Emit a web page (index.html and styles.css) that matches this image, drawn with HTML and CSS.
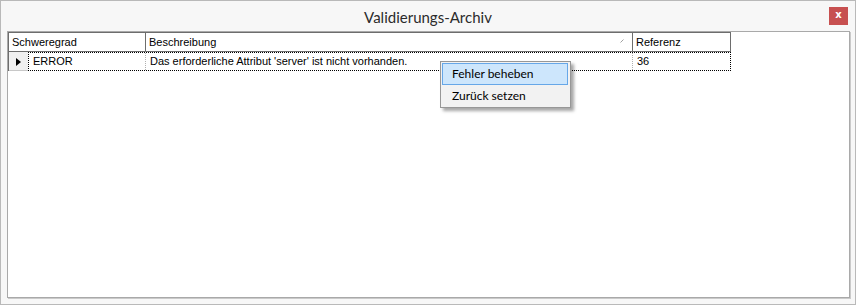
FILE: index.html
```html
<!DOCTYPE html>
<html lang="de">
  <head>
    <meta charset="UTF-8" />
    <meta name="viewport" content="width=device-width, initial-scale=1.0" />
    <title>Validierungs-Archiv</title>
    <link rel="stylesheet" href="styles.css">
  </head>
  <body>
    <div class="window">
      <div class="titlebar">
        <span></span>
        <span class="title">Validierungs-Archiv</span>
        <button class="close" type="button">x</button>
      </div>
      <div class="panel">
        <div class="grid">
          <div class="grid-head">
            <div class="hcell">Schweregrad</div>
            <div class="hcell sorted">
              Beschreibung
              <svg class="sort" width="4" height="4" viewBox="0 0 4 4">
                <line x1="0.5" y1="3.5" x2="3.5" y2="0.5" stroke="#a0a0a0" stroke-width="1" />
              </svg>
            </div>
            <div class="hcell">Referenz</div>
          </div>
          <div class="grid-row">
            <div class="rowhead">
              <svg width="5" height="8" viewBox="0 0 5 8">
                <polygon points="0,0 5,4 0,8" fill="#000" />
              </svg>
            </div>
            <div class="cells">
              <div class="cell">ERROR</div>
              <div class="cell">Das erforderliche Attribut 'server' ist nicht vorhanden.</div>
              <div class="cell">36</div>
            </div>
          </div>
        </div>
      </div>
      <ul class="menu">
        <li class="active">Fehler beheben</li>
        <li>Zurück setzen</li>
      </ul>
    </div>
  </body>
</html>
```

FILE: styles.css
```css
body {
  margin: 0;
  background-color: #ffffff;
}
.window {
  position: relative;
  box-sizing: border-box;
  width: 856px;
  height: 305px;
  border: 1px solid #b9b9b9;
  background-color: #f7f7f7;
}
.titlebar {
  display: grid;
  grid-template-columns: 1fr auto 1fr;
  height: 30px;
}
.title {
  font-family: "Lato", "Noto Sans", sans-serif;
  font-size: 15px;
  color: #2b2b2b;
  padding-top: 7px;
}
.close {
  justify-self: end;
  margin: 6px 7px 0 0;
  width: 19px;
  height: 18px;
  padding: 0 0 2px 0;
  border: none;
  background-color: #c75050;
  color: #ffffff;
  font-family: "DejaVu Sans", sans-serif;
  font-size: 10px;
  font-weight: bold;
  line-height: 14px;
}
.panel {
  box-sizing: border-box;
  height: 267px;
  margin: 0 5px 0 6px;
  border: 1px solid #a9a9a9;
  box-shadow: 1px 1px 0 #cacaca;
  background-color: #ffffff;
}
.grid {
  width: 723px;
  font-family: "Liberation Sans", Arial, sans-serif;
  font-size: 11px;
  color: #000000;
}
.grid-head {
  display: grid;
  grid-template-columns: 137px 487px 98px;
  height: 20px;
  box-sizing: border-box;
  border: 1px solid #6d6d6d;
  border-right: none;
  background-color: #ffffff;
}
.hcell {
  position: relative;
  border-right: 1px solid #6d6d6d;
  padding-left: 3px;
  line-height: 18px;
}
.sort {
  position: absolute;
  right: 8px;
  top: 6px;
}
.grid-row {
  display: flex;
  height: 19px;
  border-left: 1px solid #6d6d6d;
}
.rowhead {
  box-sizing: border-box;
  width: 19px;
  padding: 6px 0 0 7px;
  background-color: #f0f0f0;
  border-bottom: 1px solid #c8c8c8;
}
.rowhead svg {
  display: block;
}
.cells {
  display: grid;
  grid-template-columns: 117px 487px 97px;
  border: 1px dotted #000000;
}
.cell {
  border-right: 1px dotted #b0b0b0;
  padding-left: 4px;
  line-height: 17px;
  white-space: nowrap;
}
.cell:last-child {
  border-right: none;
}
.menu {
  position: absolute;
  left: 439px;
  top: 60px;
  box-sizing: border-box;
  width: 131px;
  height: 47px;
  margin: 0;
  padding: 1px 2px 0 1px;
  list-style: none;
  background-color: #f2f2f2;
  border: 1px solid #979797;
  box-shadow: 3px 3px 3px rgba(0, 0, 0, 0.35);
  font-family: "Lato", "Noto Sans", sans-serif;
  font-size: 12px;
  color: #000000;
}
.menu li {
  box-sizing: border-box;
  height: 22px;
  padding-left: 9px;
  line-height: 19px;
  border: 1px solid transparent;
}
.menu li.active {
  background-color: #cde6fc;
  border-color: #66a7e8;
}
```
